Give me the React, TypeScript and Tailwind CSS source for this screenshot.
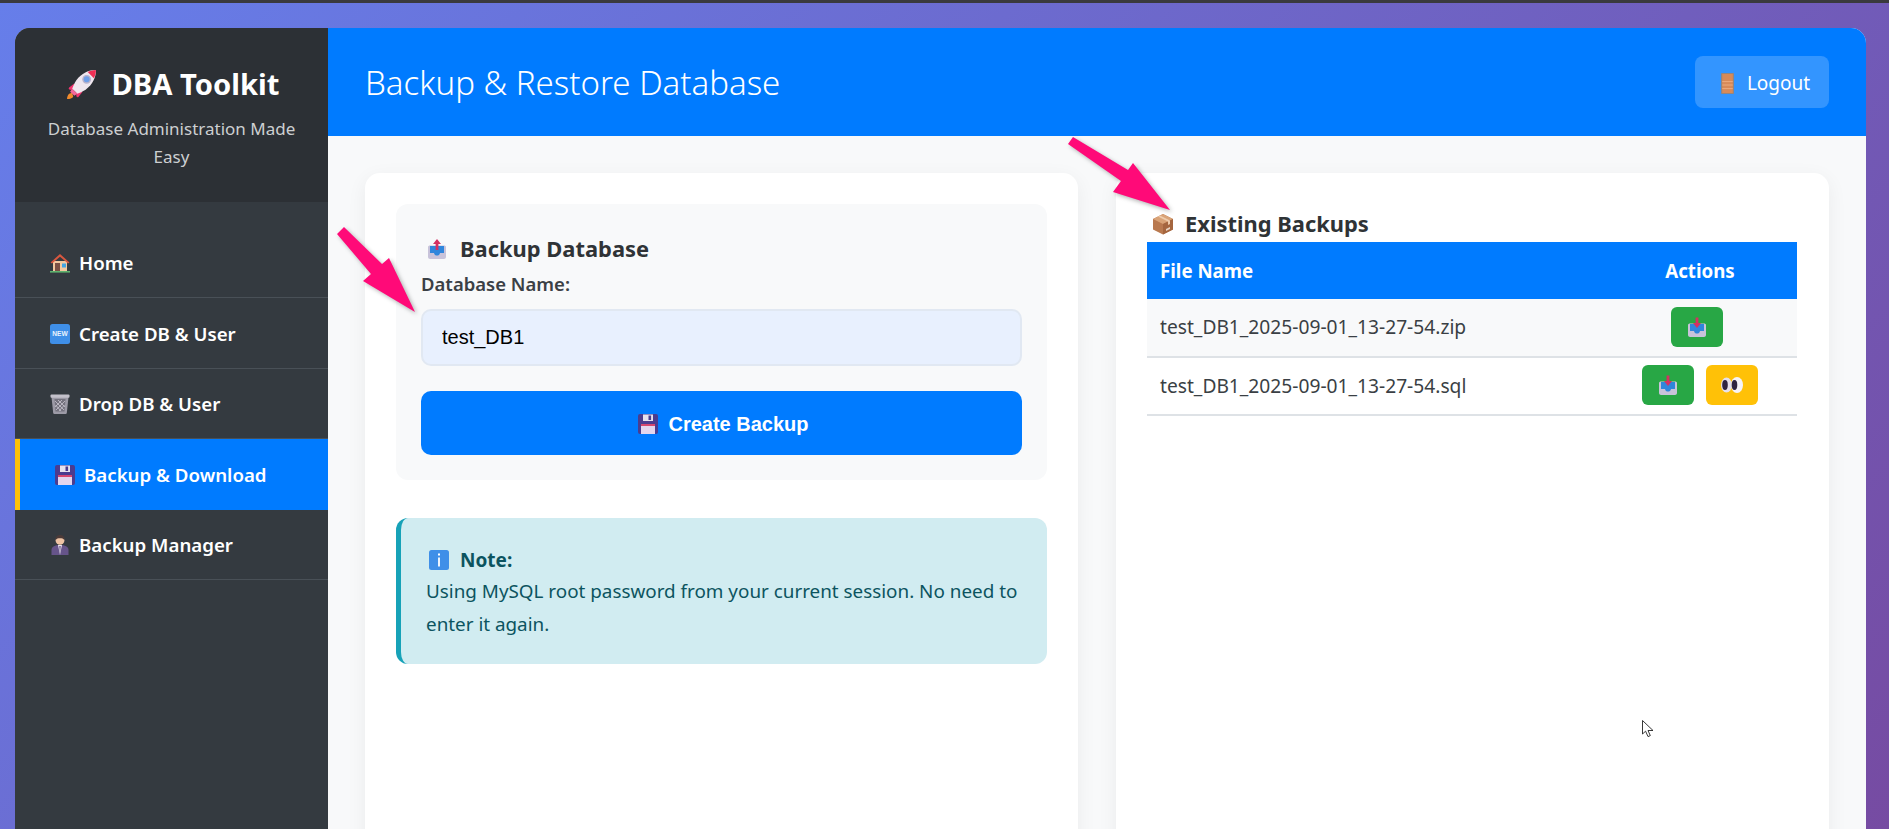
const sans = "font-['Noto_Sans',sans-serif]"

function Rocket({ className }: { className: string }) {
  return (
    <svg viewBox="0 0 30 30" className={className}>
      <path d="M3 24 C1 26 1 29 1 29 C4 29 6 28 7 27 L6 23 Z" fill="#f08a2c" />
      <path d="M8 14 L3 18 C2 19 3 20 4 20 L9 20 Z" fill="#f2336f" />
      <path d="M16 22 L12 27 C11 28 10 27 10 26 L10 21 Z" fill="#f2336f" />
      <path d="M29 1 C22 1 15 4 10 11 C8 14 7 17 6 19 L11 24 C13 23 16 22 19 20 C26 15 29 8 29 1 Z" fill="#efe6ee" />
      <path d="M29 1 C26 1 23 2 21 3 L27 9 C28 7 29 4 29 1 Z" fill="#ef2f55" />
      <path d="M6 19 L11 24 L8 26 L4 22 Z" fill="#f4689a" />
      <circle cx="20" cy="10" r="3.6" fill="#6f9ee8" stroke="#b9b3cc" strokeWidth="1.4" />
    </svg>
  )
}

function House({ className }: { className: string }) {
  return (
    <svg viewBox="0 0 20 20" className={className}>
      <path d="M3 8 H17 V18 H3 Z" fill="#f3c9a0" />
      <path d="M0.5 9.5 L10 1 L19.5 9.5 L18 10.5 L10 3.8 L2 10.5 Z" fill="#d9573f" />
      <path d="M5 10 H10 V18 H5 Z" fill="#7d5145" />
      <path d="M12 10.5 H16 V14.5 H12 Z" fill="#43a5e4" />
      <path d="M0 18 H20 V19.6 H0 Z" fill="#5fb36f" />
    </svg>
  )
}

function NewBadge({ className }: { className: string }) {
  return (
    <svg viewBox="0 0 20 20" className={className}>
      <rect width="20" height="20" rx="2.5" fill="#3f8fe8" />
      <text x="10" y="12.4" textAnchor="middle" fontSize="6.6" fontWeight="700" fontFamily="Liberation Sans, sans-serif" fill="#eaf3fd">
        NEW
      </text>
    </svg>
  )
}

function Trash({ className }: { className: string }) {
  return (
    <svg viewBox="0 0 20 20" className={className}>
      <path d="M1.5 3 H18.5 L16.8 19 C16.7 19.6 16.3 20 15.7 20 H4.3 C3.7 20 3.3 19.6 3.2 19 Z" fill="#9c9aa6" />
      <path d="M4.5 5 L15.5 5 L14.5 17.5 H5.5 Z" fill="#74727e" />
      <path d="M5 7 L14 16 M8 6 L15 13 M5.5 11 L11 17 M15 7 L6 16 M12 6 L5 13 M14.5 11 L9 17" stroke="#c9c7d0" strokeWidth="0.8" />
      <rect x="0.5" y="0.5" width="19" height="3.2" rx="1" fill="#c3c1cb" />
    </svg>
  )
}

function Floppy({ className }: { className: string }) {
  return (
    <svg viewBox="0 0 20 20" className={className}>
      <rect width="20" height="20" rx="2" fill="#4b3c8f" />
      <rect x="5" y="0.5" width="10" height="6.5" fill="#e6e2ee" />
      <rect x="10.5" y="1.5" width="2.6" height="4.5" fill="#4b3c8f" />
      <rect x="3" y="10" width="14" height="10" fill="#e3d6ee" />
      <rect x="3" y="10" width="14" height="2" fill="#d6476f" />
    </svg>
  )
}

function Manager({ className }: { className: string }) {
  return (
    <svg viewBox="0 0 20 20" className={className}>
      <path d="M1.5 20 V15 C1.5 11.5 5 10 10 10 C15 10 18.5 11.5 18.5 15 V20 Z" fill="#66548a" />
      <path d="M8 10 L10 20 L12 10 Z" fill="#e9e4ef" />
      <path d="M9.3 11 L10 19 L10.7 11 Z" fill="#5c4a7d" />
      <circle cx="10" cy="5.4" r="4.4" fill="#eec3a4" />
      <path d="M5.6 5 C5.2 1 8 0 10 0 C12 0 14.8 1 14.4 5 C13.4 3.5 12 3.2 10 3.2 C8 3.2 6.6 3.5 5.6 5 Z" fill="#4b3a38" />
    </svg>
  )
}

function Outbox({ className, down }: { className: string; down?: boolean }) {
  return (
    <svg viewBox="0 0 20 20" className={className}>
      <path d="M1 8 C1 7 2 6.5 3 6.5 H17 C18 6.5 19 7 19 8 V18 C19 19.2 18 20 17 20 H3 C2 20 1 19.2 1 18 Z" fill="#c8c3da" />
      <path d="M3 7 H17 V14 H13 C12.6 16 11.5 16.5 10 16.5 C8.5 16.5 7.4 16 7 14 H3 Z" fill="#2f86dc" />
      {down ? (
        <path d="M8.6 0.5 H11.4 V6 H14 L10 11 L6 6 H8.6 Z" fill="#d43162" />
      ) : (
        <path d="M10 0 L14 5 H11.4 V11 H8.6 V5 H6 Z" fill="#d43162" />
      )}
    </svg>
  )
}

function Box({ className }: { className: string }) {
  return (
    <svg viewBox="0 0 22 22" className={className}>
      <path d="M11 1 L21 6 V16.5 L11 21.5 L1 16.5 V6 Z" fill="#b9794f" />
      <path d="M11 1 L21 6 L11 11 L1 6 Z" fill="#d9a377" />
      <path d="M11 11 L21 6 V16.5 L11 21.5 Z" fill="#a5663f" />
      <path d="M6 3.5 L16 8.5 V12 L18 11 V7.5 L8 2.5 Z" fill="#eecbab" />
      <path d="M14 16 L18 14 V16 L14 18 Z" fill="#e8d3c2" />
    </svg>
  )
}

function Info({ className }: { className: string }) {
  return (
    <svg viewBox="0 0 20 20" className={className}>
      <rect width="20" height="20" rx="2.5" fill="#3f8fe8" />
      <rect x="9" y="3.5" width="2" height="2" fill="#fff" />
      <rect x="9.1" y="7.5" width="1.8" height="9" fill="#fff" />
    </svg>
  )
}

function Door({ className }: { className: string }) {
  return (
    <svg viewBox="0 0 13 21" className={className}>
      <rect width="13" height="21" rx="0.8" fill="#94857f" />
      <rect x="1.2" y="1" width="10.6" height="19" fill="#d88a58" />
      <path d="M1.2 8.6 H11.8 M1.2 12 H11.8 M1.2 15.6 H11.8" stroke="#eeae82" strokeWidth="0.9" />
    </svg>
  )
}

function Eyes({ className }: { className: string }) {
  return (
    <svg viewBox="0 0 22 16" className={className}>
      <ellipse cx="16" cy="8" rx="6" ry="8" fill="#f6f3f8" />
      <ellipse cx="5.5" cy="8" rx="5.5" ry="7.6" fill="#e6e1ea" />
      <ellipse cx="4" cy="8" rx="2.8" ry="5" fill="#2f2440" />
      <ellipse cx="13.5" cy="8" rx="2.8" ry="5" fill="#2f2440" />
    </svg>
  )
}

const navItems = [
  { label: "Home", icon: House },
  { label: "Create DB & User", icon: NewBadge },
  { label: "Drop DB & User", icon: Trash },
  { label: "Backup & Download", icon: Floppy, active: true },
  { label: "Backup Manager", icon: Manager },
]

function Sidebar() {
  return (
    <aside className="w-[313px] shrink-0 bg-[#343a40] text-white">
      <div className="h-[174px] bg-[#2c3035] px-6 pt-[34px] text-center">
        <h1 className="flex items-center justify-center gap-[14px] pl-[3px] text-[29.2px] leading-[44px] font-bold">
          <Rocket className="h-[31px] w-[31px]" />
          DBA Toolkit
        </h1>
        <p className="mt-[9px] text-[17px] leading-[28px] text-[#cdcfd1]">Database Administration Made Easy</p>
      </div>
      <nav className="pt-[26px]">
        {navItems.map((item) => (
          <a
            key={item.label}
            className={
              item.active
                ? "flex h-[70.4px] items-center gap-[9px] border-l-[5px] border-[#ffc107] bg-[#007bff] pt-px pl-[35px] text-[18.7px] font-semibold"
                : "flex h-[70.4px] items-center gap-[9px] border-b border-[#495057] pt-px pl-[35px] text-[18.7px] font-semibold"
            }
          >
            <item.icon className="h-5 w-5" />
            {item.label}
          </a>
        ))}
      </nav>
    </aside>
  )
}

function BackupForm() {
  return (
    <section className="h-[800px] w-[713px] rounded-[15px] bg-white px-[31px] pt-[31px] shadow-[0_5px_20px_rgba(0,0,0,0.06)]">
      <div className="h-[276px] rounded-[12px] bg-[#f8f9fa] px-[25px] pt-[30px]">
        <h2 className="flex h-[30px] items-center gap-[13px] pl-[6px] text-[21.9px] font-bold text-[#2f3336]">
          <Outbox className="h-[20px] w-[20px]" />
          Backup Database
        </h2>
        <label className="mt-[5px] block text-[18.5px] leading-[30px] font-semibold text-[#3b4045]">Database Name:</label>
        <input
          readOnly
          value="test_DB1"
          className="mt-[10px] h-[57px] w-full rounded-[10px] border-2 border-[#e1e8f2] bg-[#e8f0fe] px-[19px] font-['Liberation_Sans',sans-serif] text-[20px] text-black"
        />
        <button className="mt-[25px] flex h-[64px] w-full items-center justify-center gap-[10px] rounded-[10px] bg-[#007bff] pt-[2px] pl-[4px] font-['Liberation_Sans',sans-serif] text-[20px] font-bold text-white">
          <Floppy className="h-5 w-5" />
          Create Backup
        </button>
      </div>
      <div className="mt-[38px] h-[146px] rounded-[12px] border-l-[5px] border-[#17a2b8] bg-[#d1ecf1] pt-[27px] pr-4 pl-[25px] text-[#0c5460]">
        <strong className="flex h-[30px] items-center gap-[11px] pl-[3px] text-[19px] font-bold">
          <Info className="h-5 w-5" />
          Note:
        </strong>
        <p className="text-[18.85px] leading-[32.5px]">Using MySQL root password from your current session. No need to enter it again.</p>
      </div>
    </section>
  )
}

const backups = [
  { file: "test_DB1_2025-09-01_13-27-54.zip", preview: false },
  { file: "test_DB1_2025-09-01_13-27-54.sql", preview: true },
]

function BackupList() {
  return (
    <section className="h-[800px] w-[713px] rounded-[15px] bg-white px-[31px] pt-[34px] shadow-[0_5px_20px_rgba(0,0,0,0.06)]">
      <h2 className="flex h-[35px] items-center gap-[11px] pb-[1px] pl-[5px] text-[21.9px] font-bold text-[#2f3336]">
        <Box className="h-[22px] w-[22px]" />
        Existing Backups
      </h2>
      <table className="w-[650px] border-collapse text-[19.2px] text-[#3a3f44]">
        <thead>
          <tr className="h-[57px] bg-[#007bff] text-[18.7px] text-white">
            <th className="pt-[2px] pl-[13px] text-left font-bold">File Name</th>
            <th className="w-[194px] pt-[2px] text-center font-bold">Actions</th>
          </tr>
        </thead>
        <tbody>
          {backups.map((row, i) => (
            <tr key={row.file} className={i === 0 ? "h-[58px] border-b-2 border-[#dee2e6] bg-[#f8f9fa]" : "h-[58px] border-b-2 border-[#dee2e6]"}>
              <td className="pl-[13px]">{row.file}</td>
              <td>
                <div className={row.preview ? "flex justify-center gap-[12px] pb-[2px]" : "flex justify-center gap-[12px] pr-[6px] pb-[2px]"}>
                  <button className="flex h-10 w-[52px] items-center justify-center rounded-[6px] bg-[#28a745]">
                    <Outbox down className="h-5 w-5" />
                  </button>
                  {row.preview && (
                    <button className="flex h-10 w-[52px] items-center justify-center rounded-[6px] bg-[#ffc107]">
                      <Eyes className="h-[16px] w-[22px]" />
                    </button>
                  )}
                </div>
              </td>
            </tr>
          ))}
        </tbody>
      </table>
    </section>
  )
}

export default function App() {
  return (
    <div className={`relative h-screen overflow-hidden border-t-[3px] border-[#3a3a3e] bg-[linear-gradient(135deg,#667eea_0%,#764ba2_100%)] pt-[25px] pr-[23px] pl-[15px] ${sans}`}>
      <div className="flex min-h-[900px] overflow-hidden rounded-[15px] bg-[#f8f9fa]">
        <Sidebar />
        <main className="flex-1">
          <header className="flex h-[108px] items-center justify-between bg-[#007bff] pr-[37px] pl-[37px] text-white">
            <h1 className="pt-[2px] text-[33px] font-light">Backup &amp; Restore Database</h1>
            <button className="flex h-[52px] w-[134px] items-center justify-center gap-[13px] rounded-[8px] bg-white/20 pt-[2px] pl-[7px] text-[19px]">
              <Door className="h-[21px] w-[13px]" />
              Logout
            </button>
          </header>
          <div className="flex gap-[38px] pt-[37px] pl-[37px]">
            <BackupForm />
            <BackupList />
          </div>
        </main>
      </div>

      {/* annotation arrows drawn over the screenshot */}
      <svg viewBox="0 0 85 90" className="pointer-events-none absolute top-[222px] left-[335px] h-[90px] w-[85px] drop-shadow-[2px_2px_2px_rgba(0,0,0,0.3)]">
        <polygon points="9,2 47,39 54,33 80,87 28,56 36,49 2,9" fill="#ff0a78" />
      </svg>
      <svg viewBox="0 0 110 80" className="pointer-events-none absolute top-[132px] left-[1065px] h-[80px] w-[110px] drop-shadow-[2px_2px_2px_rgba(0,0,0,0.3)]">
        <polygon points="8,2 63,35 68,28 105,75 48,57 56,46 3,9" fill="#ff0a78" />
      </svg>
      {/* mouse pointer */}
      <svg viewBox="0 0 12 18" className="pointer-events-none absolute top-[717px] left-[1642px] h-[18px] w-[12px]">
        <path d="M0.5 0.5 V14 L3.6 11.2 L6 16.6 L8.3 15.6 L6 10.5 H11 Z" fill="#fff" stroke="#222" strokeWidth="0.9" />
      </svg>
    </div>
  )
}
